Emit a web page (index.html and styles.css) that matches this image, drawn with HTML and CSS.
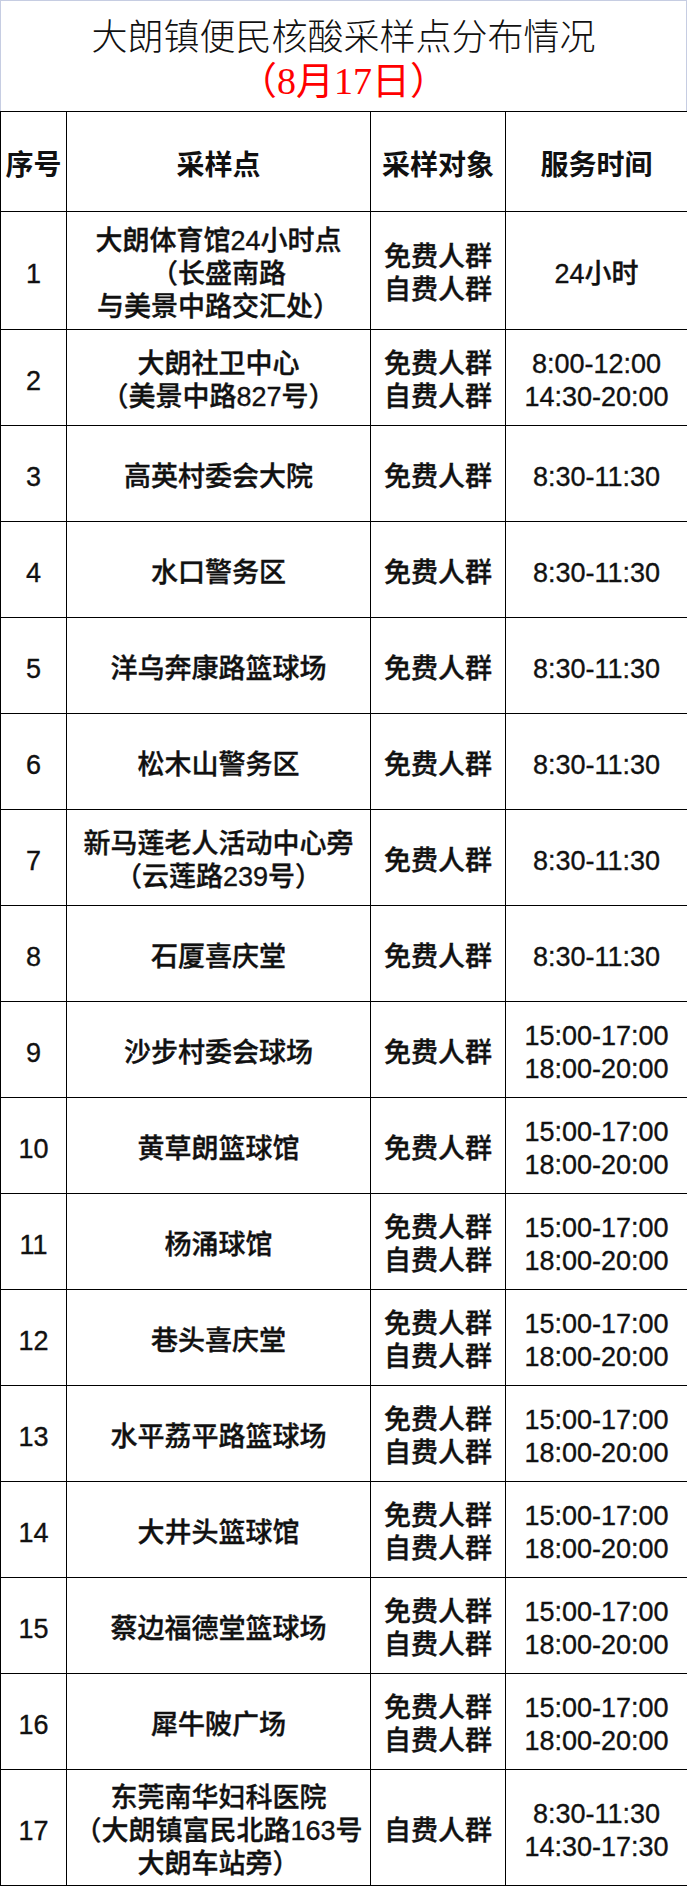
FILE: index.html
```html
<!DOCTYPE html>
<html lang="zh-CN">
<head>
<meta charset="utf-8">
<title>大朗镇便民核酸采样点分布情况</title>
<link rel="stylesheet" href="styles.css">
</head>
<body>
<div class="page">
  <header class="title">
    <h1 class="title-main">大朗镇便民核酸采样点分布情况</h1>
    <p class="title-date">（8月17日）</p>
  </header>
  <table class="sites">
    <colgroup>
      <col class="c-no"><col class="c-site"><col class="c-who"><col class="c-time">
    </colgroup>
    <thead>
      <tr class="r-head"><th>序号</th><th>采样点</th><th>采样对象</th><th>服务时间</th></tr>
    </thead>
    <tbody>
      <tr class="r-tall"><td>1</td><td>大朗体育馆24小时点<br>（长盛南路<br>与美景中路交汇处）</td><td>免费人群<br>自费人群</td><td>24小时</td></tr>
      <tr><td>2</td><td>大朗社卫中心<br>（美景中路827号）</td><td>免费人群<br>自费人群</td><td>8:00-12:00<br>14:30-20:00</td></tr>
      <tr><td>3</td><td>高英村委会大院</td><td>免费人群</td><td>8:30-11:30</td></tr>
      <tr><td>4</td><td>水口警务区</td><td>免费人群</td><td>8:30-11:30</td></tr>
      <tr><td>5</td><td>洋乌奔康路篮球场</td><td>免费人群</td><td>8:30-11:30</td></tr>
      <tr><td>6</td><td>松木山警务区</td><td>免费人群</td><td>8:30-11:30</td></tr>
      <tr><td>7</td><td>新马莲老人活动中心旁<br>（云莲路239号）</td><td>免费人群</td><td>8:30-11:30</td></tr>
      <tr><td>8</td><td>石厦喜庆堂</td><td>免费人群</td><td>8:30-11:30</td></tr>
      <tr><td>9</td><td>沙步村委会球场</td><td>免费人群</td><td>15:00-17:00<br>18:00-20:00</td></tr>
      <tr><td>10</td><td>黄草朗篮球馆</td><td>免费人群</td><td>15:00-17:00<br>18:00-20:00</td></tr>
      <tr><td>11</td><td>杨涌球馆</td><td>免费人群<br>自费人群</td><td>15:00-17:00<br>18:00-20:00</td></tr>
      <tr><td>12</td><td>巷头喜庆堂</td><td>免费人群<br>自费人群</td><td>15:00-17:00<br>18:00-20:00</td></tr>
      <tr><td>13</td><td>水平荔平路篮球场</td><td>免费人群<br>自费人群</td><td>15:00-17:00<br>18:00-20:00</td></tr>
      <tr><td>14</td><td>大井头篮球馆</td><td>免费人群<br>自费人群</td><td>15:00-17:00<br>18:00-20:00</td></tr>
      <tr><td>15</td><td>蔡边福德堂篮球场</td><td>免费人群<br>自费人群</td><td>15:00-17:00<br>18:00-20:00</td></tr>
      <tr><td>16</td><td>犀牛陂广场</td><td>免费人群<br>自费人群</td><td>15:00-17:00<br>18:00-20:00</td></tr>
      <tr class="r-last"><td>17</td><td>东莞南华妇科医院<br>（大朗镇富民北路163号<br>大朗车站旁）</td><td>自费人群</td><td>8:30-11:30<br>14:30-17:30</td></tr>
    </tbody>
  </table>
</div>
</body>
</html>
```

FILE: styles.css
```css
html, body {
  margin: 0;
  padding: 0;
  background: #ffffff;
}

.page {
  width: 687px;
}

.title {
  box-sizing: border-box;
  height: 111px;
  border: 1px solid #c6cde2;
  border-bottom: none;
  display: flex;
  flex-direction: column;
  align-items: center;
  padding-top: 16px;
}

.title-main {
  margin: 0;
  font-family: "Liberation Serif", "Noto Sans CJK SC", serif;
  font-weight: 300;
  font-size: 36px;
  line-height: 42px;
  color: #111111;
}

.title-date {
  margin: 0;
  font-family: "Liberation Serif", "Noto Sans CJK SC", serif;
  font-weight: 400;
  font-size: 38px;
  line-height: 44px;
  color: #ff0000;
}

.sites {
  width: 687px;
  table-layout: fixed;
  border-collapse: collapse;
  font-family: "Liberation Sans", "Noto Sans CJK SC", sans-serif;
  color: #111111;
}

.c-no { width: 66px; }
.c-site { width: 304px; }
.c-who { width: 135px; }
.c-time { width: 182px; }

.sites th,
.sites td {
  border: 1px solid #000000;
  padding: 7px 0 0 0;
  text-align: center;
  vertical-align: middle;
  font-size: 27px;
  line-height: 33px;
  font-weight: 500;
}

.sites td {
  -webkit-text-stroke: 0.35px #111111;
}

.sites th {
  font-size: 28px;
  font-weight: 700;
}

.sites tr { height: 96px; }
.sites tr.r-head { height: 100px; }
.sites tr.r-tall { height: 118px; }
.sites tr.r-last { height: 116px; }
```
